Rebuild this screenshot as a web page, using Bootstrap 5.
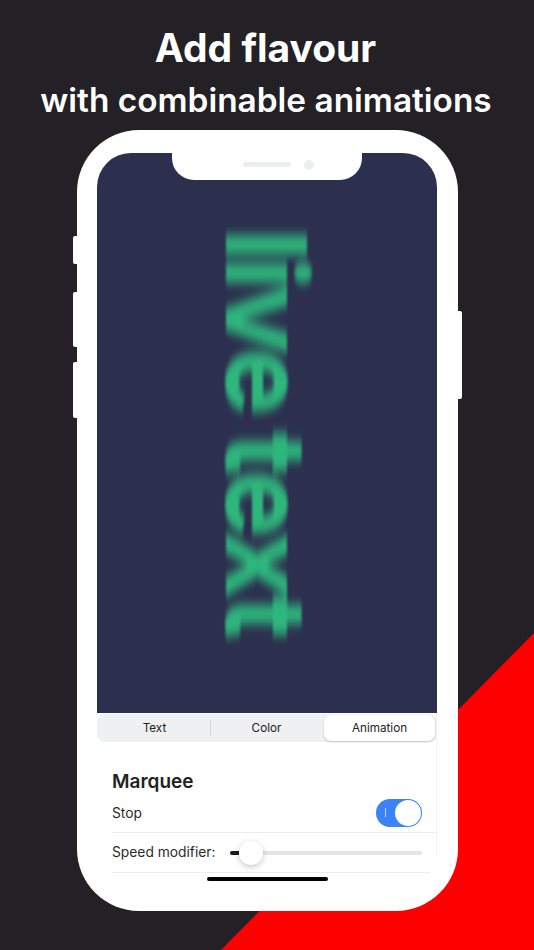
<!DOCTYPE html>
<html lang="en">
<head>
<meta charset="utf-8">
<title>Add flavour</title>
<link rel="stylesheet" href="https://cdn.jsdelivr.net/npm/bootstrap@5.3.0/dist/css/bootstrap.min.css">
<style>
html,body{width:534px;height:950px;margin:0;overflow:hidden;background:#232026;font-family:Inter,"Liberation Sans",sans-serif}
.canvas{position:relative;width:534px;height:950px;overflow:hidden;background:#232026}
.redcut{position:absolute;inset:0;background:#fe0000;clip-path:polygon(534px 633px,534px 950px,221px 950px)}
.lay{position:relative}
.head1{font-size:39px;font-weight:700;line-height:48px;padding:24px 3px 0 0;color:#fff}
.head2{font-size:33.4px;font-weight:600;line-height:48px;padding:4px 2px 0 0;color:#fff}
.phone{position:relative;width:381px;height:781px;margin:6px 0 0 77px;background:#fff;border-radius:62px;padding:23px 21px 0 20px}
.sidebtn{position:absolute;background:#fff;width:6px;border-radius:2px}
.b1{left:-4px;top:106px;height:28px}
.b2{left:-4px;top:162px;height:55px}
.b3{left:-4px;top:232px;height:56px}
.b4{right:-4px;top:181px;height:88px}
.stage{position:relative;height:560px;background:#2c2f4e;border-radius:34px 34px 0 0;overflow:hidden}
.notch{position:absolute;left:75px;top:0;width:190px;height:27px;background:#fff;border-radius:0 0 22px 22px;padding-left:23px;gap:13px}
.speaker{width:48px;height:5px;border-radius:3px;background:#ecedf1}
.cam{width:10px;height:10px;border-radius:50%;background:#ecedf1}
.livetext{writing-mode:vertical-rl;font-size:112px;font-weight:800;letter-spacing:-3.8px;line-height:84px;color:#2fb67d;white-space:nowrap;filter:url(#vblur);height:100%;padding-bottom:2px}
.panel{border-right:1px solid #f1f1f3;height:142px}
.seg{background:#eff0f1;border-radius:8px;height:28px;padding:1px 2px 1px 2px;margin:1px -1px 0 0;font-size:11.7px;color:#222}
.segitem{flex:1 1 0;text-align:center;line-height:26px}
.segdiv{width:1px;height:16px;background:#d9d9db;margin-top:5px}
.segon{background:#fff;border-radius:7px;box-shadow:0 1px 2px rgba(0,0,0,.2);margin-left:2px}
.body-pad{padding:28px 0 0 15px;color:#222}
.mtitle{font-size:19px;font-weight:600;line-height:24px}
.rowline{font-size:13.8px;border-bottom:1px solid #ececee;color:#2a2a2a}
.r1{height:38px;padding-right:14px;padding-bottom:1px;margin-top:1px}
.r2{height:39px;padding-right:14px;border:0;margin:0}
.tog{width:46px;height:28px;border-radius:14px;background:#3b82f6;position:relative}
.togmark{position:absolute;left:9px;top:9px;width:1px;height:9px;background:#bcd4fb}
.knob{position:absolute;right:1px;top:1px;width:26px;height:26px;border-radius:50%;background:#fff}
.track{position:relative;width:192px;height:4px;border-radius:2px;background:#e5e5e7}
.fill{position:absolute;left:0;top:0;width:12px;height:4px;border-radius:2px;background:#1d1d1f}
.thumb{position:absolute;left:9px;top:-10px;width:24px;height:24px;border-radius:50%;background:#fff;box-shadow:0 2px 6px rgba(0,0,0,.22)}
.endline{position:absolute;left:35px;right:28px;top:742px;height:1px;background:#ececee}
.homebar{position:absolute;left:130px;top:747px;width:121px;height:4px;border-radius:2px;background:#000}
</style>
</head>
<body>
<svg width="0" height="0" class="position-absolute"><filter id="vblur" x="-10%" y="-10%" width="120%" height="120%"><feGaussianBlur stdDeviation="1 6"/></filter></svg>
<div class="canvas">
  <div class="redcut"></div>
  <div class="lay">
    <div class="head1 text-center">Add flavour</div>
    <div class="head2 text-center">with combinable animations</div>
    <div class="phone">
      <span class="sidebtn b1"></span><span class="sidebtn b2"></span><span class="sidebtn b3"></span><span class="sidebtn b4"></span>
      <div class="stage d-flex justify-content-center align-items-center">
        <div class="livetext d-flex align-items-center justify-content-center">live text</div>
        <div class="notch d-flex justify-content-center align-items-center pb-1"><span class="speaker"></span><span class="cam"></span></div>
      </div>
      <div class="panel">
        <div class="seg d-flex">
          <div class="segitem">Text</div><div class="segdiv"></div><div class="segitem">Color</div><div class="segitem segon">Animation</div>
        </div>
        <div class="body-pad">
          <div class="mtitle">Marquee</div>
          <div class="rowline r1 d-flex justify-content-between align-items-center"><span>Stop</span><span class="tog"><span class="togmark"></span><span class="knob"></span></span></div>
          <div class="rowline r2 d-flex justify-content-between align-items-center"><span>Speed modifier:</span><span class="track"><span class="fill"></span><span class="thumb"></span></span></div>
        </div>
      </div>
      <div class="endline"></div>
      <div class="homebar"></div>
    </div>
  </div>
</div>
<script src="https://cdn.jsdelivr.net/npm/bootstrap@5.3.0/dist/js/bootstrap.bundle.min.js"></script>
</body>
</html>
